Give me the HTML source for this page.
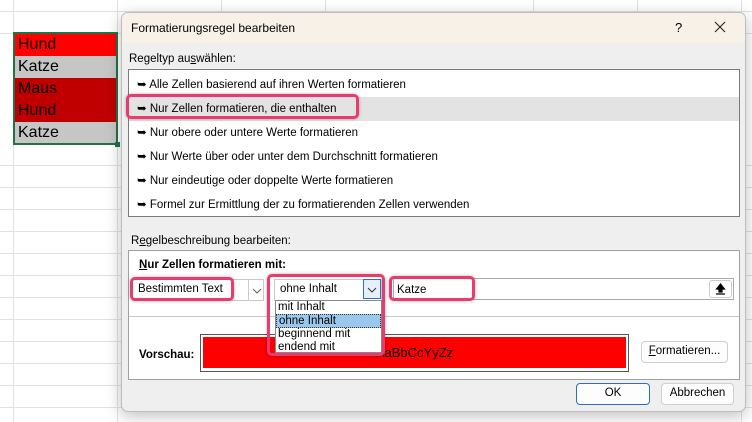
<!DOCTYPE html>
<html><head><style>
*{box-sizing:border-box;margin:0;padding:0}
body{width:752px;height:422px;overflow:hidden;background:#fff;font-family:"Liberation Sans",sans-serif;font-size:11.5px;color:#000;position:relative}
.a{position:absolute}
.hl{position:absolute;border:3px solid #e83c6e;border-radius:5px;box-shadow:0 0 3px rgba(0,0,0,.3)}
.cell{position:absolute;left:15px;width:102px;height:22px;font-size:16px;padding-left:3px;line-height:22px}
.it{position:absolute;left:8px;font-size:11.5px}
.btn{position:absolute;background:#fdfdfd;border:1px solid #cfcfcf;border-radius:4px;text-align:center;line-height:19px;font-size:11.5px}
</style></head><body>
<svg class="a" style="left:0;top:0" width="752" height="422">
<g stroke="#e1e1e1" stroke-width="1">
<line x1="13.5" y1="0" x2="13.5" y2="422"/><line x1="117.5" y1="0" x2="117.5" y2="422"/>
<line x1="0" y1="11.5" x2="752" y2="11.5"/><line x1="0" y1="33.5" x2="752" y2="33.5"/>
<line x1="0" y1="165.5" x2="752" y2="165.5"/><line x1="0" y1="187.5" x2="752" y2="187.5"/><line x1="0" y1="209.5" x2="752" y2="209.5"/><line x1="0" y1="231.5" x2="752" y2="231.5"/><line x1="0" y1="253.5" x2="752" y2="253.5"/><line x1="0" y1="275.5" x2="752" y2="275.5"/><line x1="0" y1="297.5" x2="752" y2="297.5"/><line x1="0" y1="319.5" x2="752" y2="319.5"/><line x1="0" y1="341.5" x2="752" y2="341.5"/><line x1="0" y1="363.5" x2="752" y2="363.5"/><line x1="0" y1="385.5" x2="752" y2="385.5"/><line x1="0" y1="407.5" x2="752" y2="407.5"/>
<line x1="221.5" y1="0" x2="221.5" y2="12"/><line x1="325.5" y1="0" x2="325.5" y2="12"/><line x1="533.5" y1="0" x2="533.5" y2="12"/><line x1="637.5" y1="0" x2="637.5" y2="12"/><line x1="741.5" y1="0" x2="741.5" y2="422"/>
</g></svg>
<div class="cell" style="top:34px;background:#ff0000">Hund</div>
<div class="cell" style="top:56px;background:#c6c6c6">Katze</div>
<div class="cell" style="top:78px;background:#c00000">Maus</div>
<div class="cell" style="top:100px;background:#c00000">Hund</div>
<div class="cell" style="top:122px;background:#c6c6c6">Katze</div>
<div class="a" style="left:13px;top:32px;width:105px;height:113px;border:2px solid #217346"></div>
<div class="a" style="left:115px;top:142px;width:5px;height:5px;background:#217346"></div>

<div class="a" style="left:121px;top:12px;width:625px;height:400px;background:#efefef;border:1px solid #bdbdbd;border-radius:7px;box-shadow:0 4px 16px rgba(0,0,0,.25);overflow:hidden">
 <div class="a" style="left:0;top:0;width:625px;height:30px;background:#f7f1e8"></div>
 <div class="a" style="left:9px;top:8px;font-size:12px">Formatierungsregel bearbeiten</div>
 <div class="a" style="left:553px;top:7px;font-size:13px">?</div>
 <svg class="a" style="left:592px;top:8px" width="12" height="12"><path d="M1 1L11 11M11 1L1 11" stroke="#222" stroke-width="1.1"/></svg>
 <div class="a" style="left:7px;top:40px">Regeltyp au<u>s</u>wählen:</div>
 <div class="a" style="left:6px;top:56px;width:612px;height:148px;background:#fff;border:1px solid #7a7a7a">
  <div class="a" style="left:0;top:27px;width:610px;height:24px;background:#e3e3e3"></div>
  <div class="it" style="top:7px">➥ Alle Zellen basierend auf ihren Werten formatieren</div>
  <div class="it" style="top:31px">➥ Nur Zellen formatieren, die enthalten</div>
  <div class="it" style="top:55px">➥ Nur obere oder untere Werte formatieren</div>
  <div class="it" style="top:79px">➥ Nur Werte über oder unter dem Durchschnitt formatieren</div>
  <div class="it" style="top:103px">➥ Nur eindeutige oder doppelte Werte formatieren</div>
  <div class="it" style="top:127px">➥ Formel zur Ermittlung der zu formatierenden Zellen verwenden</div>
 </div>
 <div class="a" style="left:9px;top:222px">R<u>e</u>gelbeschreibung bearbeiten:</div>
 <div class="a" style="left:6px;top:237px;width:612px;height:130px;background:#fff;border:1px solid #a0a0a0">
  <div class="a" style="left:10px;top:8px;font-weight:bold"><u>N</u>ur Zellen formatieren mit:</div>
  <div class="a" style="left:0;top:65px;width:610px;height:1px;background:#c8c8c8"></div>
  <div class="a" style="left:10px;top:98px;font-weight:bold">Vorschau:</div>
 </div>
 <div class="a" style="left:10px;top:266px;width:132px;height:22px;background:#fff;border:1px solid #c8c8c8"></div>
 <div class="a" style="left:16px;top:270px">Bestimmten Text</div>
 <div class="a" style="left:126px;top:267px;width:16px;height:20px;border-left:1px solid #ccc"><svg width="16" height="20"><path d="M4 9L8 13L12 9" fill="none" stroke="#666"/></svg></div>
 <div class="a" style="left:152px;top:266px;width:108px;height:22px;background:#fff;border:1px solid #c8c8c8"></div>
 <div class="a" style="left:158px;top:270px">ohne Inhalt</div>
 <div class="a" style="left:241px;top:266px;width:18px;height:20px;border:1px solid #2d6fc2;background:#e6f0fa"><svg width="16" height="18"><path d="M4 8L8 12L12 8" fill="none" stroke="#333"/></svg></div>
 <div class="a" style="left:271px;top:265px;width:341px;height:22px;background:#fff;border:1px solid #aaa"></div>
 <div class="a" style="left:275px;top:271px">Katze</div>
 <div class="a" style="left:587px;top:267px;width:23px;height:18px;background:#fff;border:1px solid #ccc;border-radius:3px"><svg width="21" height="16"><path d="M10.5 3L6.5 8H9V11H12V8H14.5Z M6 13H15" fill="#000" stroke="#000" stroke-width="1.2"/></svg></div>
 <div class="a" style="left:78px;top:321px;width:429px;height:38px;border:1px solid #555;background:#fff"></div>
 <div class="a" style="left:81px;top:324px;width:423px;height:31px;background:#ff0000;text-align:center;line-height:31px;font-size:13px">AaBbCcYyZz</div>
 <div class="a" style="left:153px;top:287px;width:107px;height:53px;background:#fff;border:1px solid #888;font-size:11.5px;line-height:12.5px">
  <div style="padding-left:2px">mit Inhalt</div>
  <div style="padding-left:2px;background:#9cc7ec;border:1px dotted #333">ohne Inhalt</div>
  <div style="padding-left:2px">beginnend mit</div>
  <div style="padding-left:2px">endend mit</div>
 </div>
 <div class="btn" style="left:519px;top:328px;width:87px;height:22px"><u>F</u>ormatieren...</div>
 <div class="btn" style="left:454px;top:370px;width:74px;height:22px;border:1px solid #2d6fc2">OK</div>
 <div class="btn" style="left:539px;top:370px;width:73px;height:22px">Abbrechen</div>
</div>
<div class="hl" style="left:126px;top:94px;width:233px;height:25px"></div>
<div class="hl" style="left:130px;top:277px;width:104px;height:24px"></div>
<div class="hl" style="left:267px;top:274px;width:118px;height:82px"></div>
<div class="hl" style="left:389px;top:276px;width:86px;height:25px"></div>
</body></html>
